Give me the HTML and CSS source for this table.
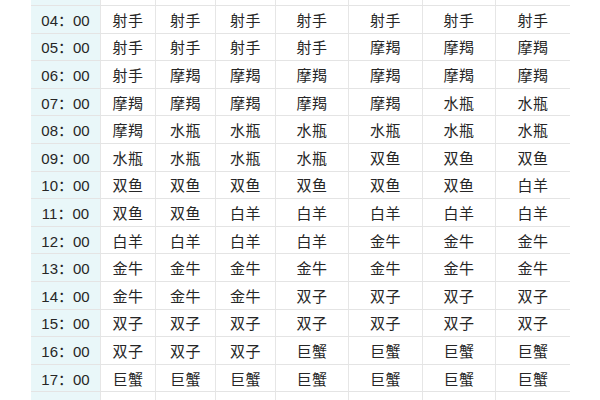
FILE: index.html
```html
<!DOCTYPE html>
<html lang="zh">
<head>
<meta charset="utf-8">
<link rel="stylesheet" href="styles.css">
</head>
<body>
<div class="table">
  <div class="row"><div class="time"></div><div></div><div></div><div></div><div></div><div></div><div></div><div></div></div>
  <div class="row"><div class="time">04：00</div><div>射手</div><div>射手</div><div>射手</div><div>射手</div><div>射手</div><div>射手</div><div>射手</div></div>
  <div class="row"><div class="time">05：00</div><div>射手</div><div>射手</div><div>射手</div><div>射手</div><div>摩羯</div><div>摩羯</div><div>摩羯</div></div>
  <div class="row"><div class="time">06：00</div><div>射手</div><div>摩羯</div><div>摩羯</div><div>摩羯</div><div>摩羯</div><div>摩羯</div><div>摩羯</div></div>
  <div class="row"><div class="time">07：00</div><div>摩羯</div><div>摩羯</div><div>摩羯</div><div>摩羯</div><div>摩羯</div><div>水瓶</div><div>水瓶</div></div>
  <div class="row"><div class="time">08：00</div><div>摩羯</div><div>水瓶</div><div>水瓶</div><div>水瓶</div><div>水瓶</div><div>水瓶</div><div>水瓶</div></div>
  <div class="row"><div class="time">09：00</div><div>水瓶</div><div>水瓶</div><div>水瓶</div><div>水瓶</div><div>双鱼</div><div>双鱼</div><div>双鱼</div></div>
  <div class="row"><div class="time">10：00</div><div>双鱼</div><div>双鱼</div><div>双鱼</div><div>双鱼</div><div>双鱼</div><div>双鱼</div><div>白羊</div></div>
  <div class="row"><div class="time">11：00</div><div>双鱼</div><div>双鱼</div><div>白羊</div><div>白羊</div><div>白羊</div><div>白羊</div><div>白羊</div></div>
  <div class="row"><div class="time">12：00</div><div>白羊</div><div>白羊</div><div>白羊</div><div>白羊</div><div>金牛</div><div>金牛</div><div>金牛</div></div>
  <div class="row"><div class="time">13：00</div><div>金牛</div><div>金牛</div><div>金牛</div><div>金牛</div><div>金牛</div><div>金牛</div><div>金牛</div></div>
  <div class="row"><div class="time">14：00</div><div>金牛</div><div>金牛</div><div>金牛</div><div>双子</div><div>双子</div><div>双子</div><div>双子</div></div>
  <div class="row"><div class="time">15：00</div><div>双子</div><div>双子</div><div>双子</div><div>双子</div><div>双子</div><div>双子</div><div>双子</div></div>
  <div class="row"><div class="time">16：00</div><div>双子</div><div>双子</div><div>双子</div><div>巨蟹</div><div>巨蟹</div><div>巨蟹</div><div>巨蟹</div></div>
  <div class="row"><div class="time">17：00</div><div>巨蟹</div><div>巨蟹</div><div>巨蟹</div><div>巨蟹</div><div>巨蟹</div><div>巨蟹</div><div>巨蟹</div></div>
  <div class="row"><div class="time"></div><div></div><div></div><div></div><div></div><div></div><div></div><div></div></div>
</div>
</body>
</html>
```
FILE: styles.css
```css
html, body {
  margin: 0;
  padding: 0;
  background: #ffffff;
  overflow: hidden;
}
body {
  font-family: "Liberation Sans", "Noto Sans CJK SC", sans-serif;
  font-size: 15px;
  color: #262626;
}
.table {
  margin-top: -21.6px;
  margin-left: 31px;
  width: 539px;
}
.row {
  display: grid;
  grid-template-columns: 69px 55px 60px 60px 73px 74px 73px 75px;
  height: 27.6px;
  box-sizing: border-box;
  border-bottom: 1px solid #e4e4e4;
}
.row > div {
  display: flex;
  align-items: center;
  justify-content: center;
  border-left: 1px solid #e6e6e6;
  letter-spacing: 0.5px;
}
.row > .time {
  border-left: none;
  background: #e9f7f9;
  letter-spacing: 0;
}
```
